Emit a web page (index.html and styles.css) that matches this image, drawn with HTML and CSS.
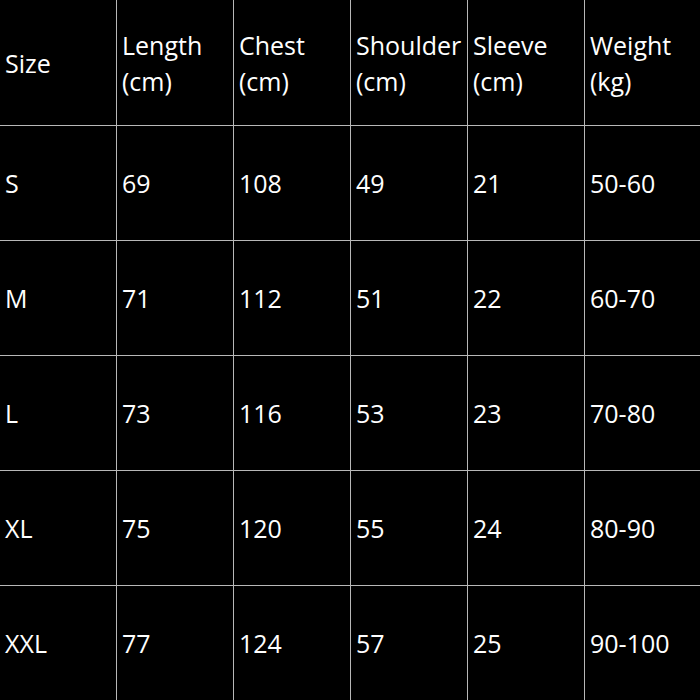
FILE: index.html
```html
<!DOCTYPE html>
<html>
<head>
<meta charset="utf-8">
<link rel="stylesheet" href="styles.css">
</head>
<body>
<div class="chart">
  <div class="cell">Size</div>
  <div class="cell">Length<br>(cm)</div>
  <div class="cell">Chest<br>(cm)</div>
  <div class="cell">Shoulder<br>(cm)</div>
  <div class="cell">Sleeve<br>(cm)</div>
  <div class="cell">Weight<br>(kg)</div>

  <div class="cell">S</div><div class="cell">69</div><div class="cell">108</div><div class="cell">49</div><div class="cell">21</div><div class="cell">50-60</div>
  <div class="cell">M</div><div class="cell">71</div><div class="cell">112</div><div class="cell">51</div><div class="cell">22</div><div class="cell">60-70</div>
  <div class="cell">L</div><div class="cell">73</div><div class="cell">116</div><div class="cell">53</div><div class="cell">23</div><div class="cell">70-80</div>
  <div class="cell">XL</div><div class="cell">75</div><div class="cell">120</div><div class="cell">55</div><div class="cell">24</div><div class="cell">80-90</div>
  <div class="cell">XXL</div><div class="cell">77</div><div class="cell">124</div><div class="cell">57</div><div class="cell">25</div><div class="cell">90-100</div>
</div>
</body>
</html>
```
FILE: styles.css
```css
html, body {
  margin: 0;
  padding: 0;
  background: #000;
}
.chart {
  width: 701px;
  height: 700px;
  display: grid;
  grid-template-columns: repeat(6, 1fr);
  grid-template-rows: 125px repeat(5, 114px);
  gap: 1px;
  background: #b8b8b8;
  font-family: "Open Sans", "Liberation Sans", sans-serif;
  font-size: 25px;
  line-height: 36px;
  color: #fff;
}
.cell {
  background: #000;
  display: flex;
  align-items: center;
  padding-left: 5px;
  white-space: nowrap;
  overflow: hidden;
}
```
